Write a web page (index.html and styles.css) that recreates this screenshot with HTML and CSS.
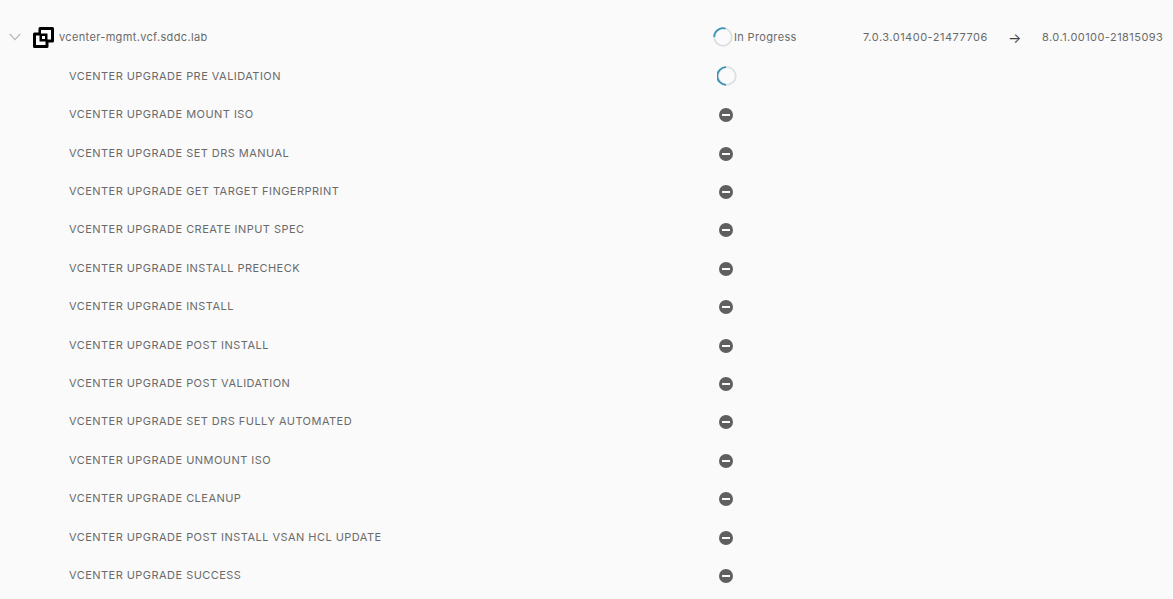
FILE: index.html
```html
<!DOCTYPE html>
<html lang="en">
<head>
  <meta charset="UTF-8">
  <title>vCenter Upgrade</title>
  <link rel="stylesheet" href="styles.css">
</head>
<body>
  <div class="head-row">
    <svg class="chevron" viewBox="0 0 12 8" width="12" height="8"><path d="M0.7 0.8 L6 6.6 L11.3 0.8" fill="none" stroke="#b4b4b4" stroke-width="1.2"/></svg>
    <svg class="vm-icon" viewBox="0 0 21 21" width="21" height="21">
      <path d="M7 0 H19.5 a1.5 1.5 0 0 1 1.5 1.5 V14 a1.5 1.5 0 0 1 -1.5 1.5 H15.5 V19.5 a1.5 1.5 0 0 1 -1.5 1.5 H1.5 a1.5 1.5 0 0 1 -1.5 -1.5 V7 a1.5 1.5 0 0 1 1.5 -1.5 H5.5 V1.5 a1.5 1.5 0 0 1 1.5 -1.5 Z" fill="#000"/>
      <path d="M8 3 H18 V12.5 H14.5 V6.5 H8 Z" fill="#fff"/>
      <path d="M3 8.5 H6.5 V14.5 H12.5 V18 H3 Z" fill="#fff"/>
      <rect x="9" y="9" width="3" height="3" fill="#fff"/>
    </svg>
    <span class="host">vcenter-mgmt.vcf.sddc.lab</span>
    <span class="status">
      <svg class="spin" viewBox="0 0 20 20" width="20" height="20"><circle cx="10" cy="10" r="8.8" fill="none" stroke="#dcdfe1" stroke-width="1.8"/><path d="M1.2 10 A8.8 8.8 0 0 1 12.5 1.6" fill="none" stroke="#3a93b8" stroke-width="1.8"/></svg>
      In Progress
    </span>
    <span class="ver-from">7.0.3.01400-21477706</span>
    <span class="arrow">→</span>
    <span class="ver-to">8.0.1.00100-21815093</span>
  </div>

  <div class="task-row">
    <span class="task-name">VCENTER UPGRADE PRE VALIDATION</span>
    <svg class="spin-task" viewBox="0 0 20 20" width="20" height="20"><circle cx="10" cy="10" r="8.8" fill="none" stroke="#dcdfe1" stroke-width="1.8"/><path d="M9 18.8 A8.8 8.8 0 0 1 9 1.2" fill="none" stroke="#3a93b8" stroke-width="1.8"/></svg>
  </div>
  <div class="task-row"><span class="task-name">VCENTER UPGRADE MOUNT ISO</span><span class="pending"></span></div>
  <div class="task-row"><span class="task-name">VCENTER UPGRADE SET DRS MANUAL</span><span class="pending"></span></div>
  <div class="task-row"><span class="task-name">VCENTER UPGRADE GET TARGET FINGERPRINT</span><span class="pending"></span></div>
  <div class="task-row"><span class="task-name">VCENTER UPGRADE CREATE INPUT SPEC</span><span class="pending"></span></div>
  <div class="task-row"><span class="task-name">VCENTER UPGRADE INSTALL PRECHECK</span><span class="pending"></span></div>
  <div class="task-row"><span class="task-name">VCENTER UPGRADE INSTALL</span><span class="pending"></span></div>
  <div class="task-row"><span class="task-name">VCENTER UPGRADE POST INSTALL</span><span class="pending"></span></div>
  <div class="task-row"><span class="task-name">VCENTER UPGRADE POST VALIDATION</span><span class="pending"></span></div>
  <div class="task-row"><span class="task-name">VCENTER UPGRADE SET DRS FULLY AUTOMATED</span><span class="pending"></span></div>
  <div class="task-row"><span class="task-name">VCENTER UPGRADE UNMOUNT ISO</span><span class="pending"></span></div>
  <div class="task-row"><span class="task-name">VCENTER UPGRADE CLEANUP</span><span class="pending"></span></div>
  <div class="task-row"><span class="task-name">VCENTER UPGRADE POST INSTALL VSAN HCL UPDATE</span><span class="pending"></span></div>
  <div class="task-row"><span class="task-name">VCENTER UPGRADE SUCCESS</span><span class="pending"></span></div>
</body>
</html>
```
FILE: styles.css
```css
html, body {
  height: 100%;
}

body {
  margin: 0;
  padding-top: 18px;
  box-sizing: border-box;
  overflow: hidden;
  background: #fafafa;
  color: #6a6a6a;
  font-family: 'Inter', 'Liberation Sans', sans-serif;
  font-size: 11px;
}

.head-row {
  display: flex;
  align-items: center;
  height: 38px;
  margin-bottom: 0.6px;
  padding-left: 9px;
  white-space: nowrap;
}

.chevron {
  margin-right: 12px;
}

.vm-icon {
  margin-right: 5px;
}

.host {
  width: 654px;
  letter-spacing: 0.35px;
}

.status {
  display: flex;
  align-items: center;
  gap: 1px;
  width: 150px;
  letter-spacing: 0.35px;
}

.ver-from {
  width: 145px;
  letter-spacing: 0.5px;
}

.arrow {
  width: 34px;
  font-size: 14px;
  color: #444;
}

.ver-to {
  letter-spacing: 0.45px;
}

.task-row {
  display: flex;
  align-items: center;
  height: 38.42px;
  padding-left: 69px;
  white-space: nowrap;
}

.task-name {
  width: 650px;
  font-size: 11px;
  letter-spacing: 0.46px;
}

.spin-task {
  margin-left: -2px;
  margin-top: 1px;
}

.pending {
  display: block;
  position: relative;
  width: 14px;
  height: 14px;
  margin-top: 2px;
  border-radius: 50%;
  background: #5f5f5f;
}

.pending::after {
  content: "";
  position: absolute;
  left: 3px;
  top: 6px;
  width: 8px;
  height: 2px;
  background: #fafafa;
}
```
